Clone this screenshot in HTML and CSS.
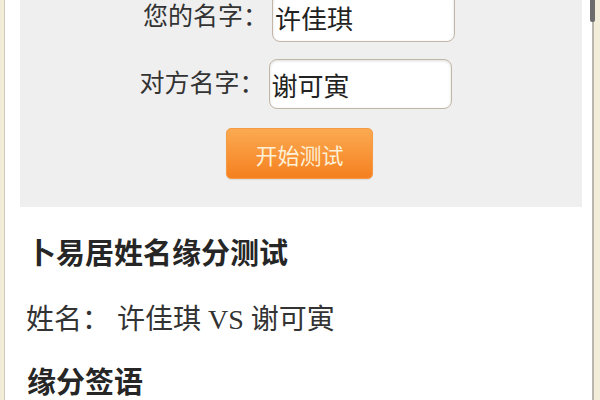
FILE: index.html
```html
<!DOCTYPE html>
<html lang="zh-CN">
<head>
<meta charset="utf-8">
<title>卜易居姓名缘分测试</title>
<link rel="stylesheet" href="styles.css">
</head>
<body>
<div class="page">
  <form class="panel">
    <div class="row row-first">
      <label class="label">您的名字：</label>
      <input class="field" type="text" value="许佳琪">
    </div>
    <div class="row row-second">
      <label class="label">对方名字：</label>
      <input class="field" type="text" value="谢可寅">
    </div>
    <div class="row row-btn">
      <button class="btn" type="button">开始测试</button>
    </div>
  </form>
  <div class="content">
    <h2 class="title">卜易居姓名缘分测试</h2>
    <p class="names">姓名： 许佳琪 VS 谢可寅</p>
    <h3 class="subtitle">缘分签语</h3>
  </div>
  <div class="scroll-thumb"></div>
</div>
</body>
</html>
```

FILE: styles.css
```css
html, body {
  margin: 0;
  padding: 0;
  height: 100%;
  overflow: hidden;
  background: #f1edd9;
}

body {
  font-family: "Liberation Serif", "Noto Sans CJK SC", serif;
  color: #333;
}

.page {
  position: relative;
  margin: 0 6px 0 4px;
  height: 100%;
  background: #ffffff;
  border-left: 1px solid #cfcbbc;
  border-right: 2px solid #b9b7ad;
  padding: 0 10px 0 15px;
  box-sizing: border-box;
}

.panel {
  margin: 0;
  background: #efefef;
  padding: 0 0 28px;
  display: flex;
  flex-direction: column;
}

.row {
  display: flex;
  justify-content: center;
  align-items: center;
  gap: 4px;
}

.row-first {
  margin-top: -8px;
  padding-right: 4px;
}

.row-second {
  margin-top: 17px;
  padding-right: 11px;
}

.row-btn {
  margin-top: 19px;
  padding-right: 3px;
}

.label {
  font-size: 25px;
  line-height: 30px;
  color: #333;
}

.field {
  width: 183px;
  height: 50px;
  box-sizing: border-box;
  border: 1px solid #c2b6a8;
  border-radius: 8px;
  background: #ffffff;
  box-shadow: inset 0 1px 3px rgba(0, 0, 0, 0.14);
  padding: 0 0 0 2px;
  font-family: "Liberation Serif", "Noto Sans CJK SC", serif;
  font-size: 26px;
  color: #222;
  outline: none;
}

.btn {
  width: 147px;
  height: 51px;
  box-sizing: border-box;
  border: 1px solid #f39a45;
  border-radius: 5px;
  background: linear-gradient(#fbaa52, #f5801f);
  color: #fdf0d6;
  font-family: "Liberation Serif", "Noto Sans CJK SC", serif;
  font-size: 22px;
  padding: 0;
  box-shadow: 0 1px 1px rgba(0, 0, 0, 0.08);
}

.content {
  padding: 0 0 0 7px;
}

.title {
  margin: 27px 0 0;
  font-size: 29px;
  line-height: 40px;
  font-weight: bold;
  color: #262626;
}

.names {
  margin: 26px 0 0 -1px;
  font-size: 28px;
  line-height: 40px;
  color: #333;
}

.subtitle {
  margin: 23px 0 0;
  font-size: 29px;
  line-height: 40px;
  font-weight: bold;
  color: #262626;
}

.scroll-thumb {
  position: absolute;
  top: 0;
  right: -3px;
  width: 5px;
  height: 22px;
  background: #6c6c6c;
  border-radius: 0 0 2px 2px;
}
```
